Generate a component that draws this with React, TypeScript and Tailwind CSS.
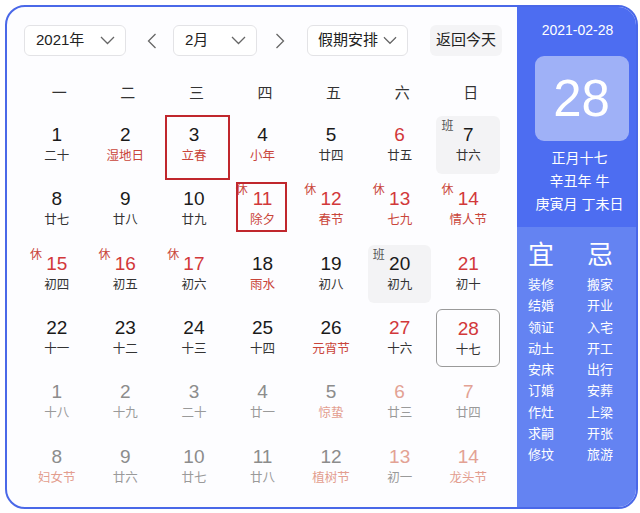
import React from "react";

type Cell = {
  d: number;
  l: string;
  red?: boolean;
  lred?: boolean;
  faded?: boolean;
  tag?: "休" | "班";
  gray?: boolean;
  sel?: boolean;
  box?: "big" | "small";
};

const rows: Cell[][] = [
  [
    { d: 1, l: "二十" },
    { d: 2, l: "湿地日", lred: true },
    { d: 3, l: "立春", lred: true, box: "big" },
    { d: 4, l: "小年", lred: true },
    { d: 5, l: "廿四" },
    { d: 6, l: "廿五", red: true },
    { d: 7, l: "廿六", tag: "班", gray: true },
  ],
  [
    { d: 8, l: "廿七" },
    { d: 9, l: "廿八" },
    { d: 10, l: "廿九" },
    { d: 11, l: "除夕", red: true, lred: true, tag: "休", box: "small" },
    { d: 12, l: "春节", red: true, lred: true, tag: "休" },
    { d: 13, l: "七九", red: true, lred: true, tag: "休" },
    { d: 14, l: "情人节", red: true, lred: true, tag: "休" },
  ],
  [
    { d: 15, l: "初四", red: true, tag: "休" },
    { d: 16, l: "初五", red: true, tag: "休" },
    { d: 17, l: "初六", red: true, tag: "休" },
    { d: 18, l: "雨水", lred: true },
    { d: 19, l: "初八" },
    { d: 20, l: "初九", tag: "班", gray: true },
    { d: 21, l: "初十", red: true },
  ],
  [
    { d: 22, l: "十一" },
    { d: 23, l: "十二" },
    { d: 24, l: "十三" },
    { d: 25, l: "十四" },
    { d: 26, l: "元宵节", lred: true },
    { d: 27, l: "十六", red: true },
    { d: 28, l: "十七", red: true, sel: true },
  ],
  [
    { d: 1, l: "十八", faded: true },
    { d: 2, l: "十九", faded: true },
    { d: 3, l: "二十", faded: true },
    { d: 4, l: "廿一", faded: true },
    { d: 5, l: "惊蛰", faded: true, lred: true },
    { d: 6, l: "廿三", faded: true, red: true },
    { d: 7, l: "廿四", faded: true, red: true },
  ],
  [
    { d: 8, l: "妇女节", faded: true, lred: true },
    { d: 9, l: "廿六", faded: true },
    { d: 10, l: "廿七", faded: true },
    { d: 11, l: "廿八", faded: true },
    { d: 12, l: "植树节", faded: true, lred: true },
    { d: 13, l: "初一", faded: true, red: true },
    { d: 14, l: "龙头节", faded: true, red: true, lred: true },
  ],
];

const yi = ["装修", "结婚", "领证", "动土", "安床", "订婚", "作灶", "求嗣", "修坟"];
const ji = ["搬家", "开业", "入宅", "开工", "出行", "安葬", "上梁", "开张", "旅游"];

function ChevDown({ w = 15 }: { w?: number }) {
  return (
    <svg width={w} height={9} viewBox="0 0 15 9" fill="none">
      <polyline points="1,1 7.5,7.5 14,1" stroke="#666" strokeWidth="1.3" />
    </svg>
  );
}

function ChevSide({ dir }: { dir: "l" | "r" }) {
  return (
    <svg width={10} height={16} viewBox="0 0 10 16" fill="none">
      {dir === "l" ? (
        <polyline points="8.5,1 1.5,8 8.5,15" stroke="#666" strokeWidth="1.3" />
      ) : (
        <polyline points="1.5,1 8.5,8 1.5,15" stroke="#666" strokeWidth="1.3" />
      )}
    </svg>
  );
}

function DayCell({ c }: { c: Cell }) {
  let numColor = "text-[#1a1a1a]";
  let lunColor = "text-[#333]";
  if (c.faded) {
    numColor = c.red ? "text-[#e3a294]" : "text-[#8c8c8c]";
    lunColor = c.lred ? "text-[#e39d8f]" : "text-[#9a9a9a]";
  } else {
    if (c.red) numColor = "text-[#d2383a]";
    if (c.lred) lunColor = "text-[#c9453a]";
  }
  return (
    <div
      className={
        "relative h-[58px] rounded-[6px] flex flex-col items-center pt-[8px] " +
        (c.gray ? "bg-[#f3f3f5] " : "") +
        (c.sel ? "border border-[#9a9a9a] " : "")
      }
    >
      <div className={"text-[19px] leading-[22px] " + numColor}>{c.d}</div>
      <div className={"mt-[2px] text-[12.5px] leading-[16px] " + lunColor}>{c.l}</div>
      {c.tag && (
        <div
          className={
            "absolute left-[5px] top-[3px] text-[12px] leading-[14px] " +
            (c.tag === "休" ? "text-[#c9453a]" : "text-[#555]")
          }
        >
          {c.tag}
        </div>
      )}
      {c.box === "big" && (
        <div className="absolute left-[3px] top-[-1px] w-[65px] h-[65px] border-2 border-[#c0272d]" />
      )}
      {c.box === "small" && (
        <div className="absolute left-[5px] top-[2px] w-[51px] h-[50px] border-2 border-[#c0272d]" />
      )}
    </div>
  );
}

export default function App() {
  return (
    <div
      className="w-[640px] h-[513px] bg-white pt-[5px] pl-[5px]"
      style={{ fontFamily: '"Liberation Sans", "Noto Sans CJK SC", sans-serif' }}
    >
      <div className="w-[633px] h-[504px] rounded-[20px] border-2 border-[#4a68e8] overflow-hidden flex bg-[#fdfdff]">
        {/* Left calendar */}
        <div className="flex-1 pl-[17px] pr-[12px] pt-[18px]">
          {/* toolbar */}
          <div className="flex items-center h-[31px]">
            <div className="w-[102px] h-[31px] rounded-[6px] border border-[#e3e3e6] bg-white flex items-center justify-between pl-[11px] pr-[10px]">
              <span className="text-[15px] text-[#222]">2021年</span>
              <ChevDown />
            </div>
            <div className="ml-[21px] flex items-center">
              <ChevSide dir="l" />
            </div>
            <div className="ml-[16px] w-[84px] h-[31px] rounded-[6px] border border-[#e3e3e6] bg-white flex items-center justify-between pl-[11px] pr-[10px]">
              <span className="text-[15px] text-[#222]">2月</span>
              <ChevDown />
            </div>
            <div className="ml-[18px] flex items-center">
              <ChevSide dir="r" />
            </div>
            <div className="ml-[22px] w-[101px] h-[31px] rounded-[6px] border border-[#e3e3e6] bg-white flex items-center justify-between pl-[10px] pr-[10px]">
              <span className="text-[15px] text-[#222]">假期安排</span>
              <ChevDown w={14} />
            </div>
            <div className="ml-[22px] w-[72px] h-[31px] rounded-[6px] bg-[#f4f4f6] flex items-center justify-center">
              <span className="text-[15px] text-[#222]">返回今天</span>
            </div>
          </div>
          {/* weekdays */}
          <div className="grid grid-cols-7 w-[480px] ml-[1px] mt-[20px] h-[34px] items-center">
            {["一", "二", "三", "四", "五", "六", "日"].map((w) => (
              <div key={w} className="text-center text-[15px] text-[#333]">
                {w}
              </div>
            ))}
          </div>
          {/* days */}
          <div className="grid grid-cols-7 gap-x-[5px] gap-y-[6.33px] w-[475px] ml-[1px] mt-[6px]">
            {rows.flat().map((c, i) => (
              <DayCell key={i} c={c} />
            ))}
          </div>
        </div>
        {/* Right panel */}
        <div className="w-[120px] flex flex-col text-white">
          <div className="bg-[#4d6df1] h-[220px] flex flex-col items-center pt-[14px]">
            <div className="text-[14px] leading-[18px] pl-[2px]">2021-02-28</div>
            <div className="mt-[17px] ml-[10px] w-[94px] h-[85px] rounded-[9px] bg-[#9fb1f7] flex items-center justify-center">
              <span className="text-[51px] leading-none">28</span>
            </div>
            <div className="mt-[6px] ml-[6px] text-[14px] leading-[23px] text-center">
              <div>正月十七</div>
              <div>辛丑年 牛</div>
              <div>庚寅月 丁未日</div>
            </div>
          </div>
          <div className="flex-1 bg-[#6483f2] flex pl-[11px] pt-[12px]">
            <div className="w-[59px] flex flex-col">
              <div className="text-[26px] leading-[32px] pl-[0px]">宜</div>
              <div className="mt-[3px] flex flex-col">
                {yi.map((t) => (
                  <div key={t} className="text-[13px] leading-[21.3px]">
                    {t}
                  </div>
                ))}
              </div>
            </div>
            <div className="flex flex-col">
              <div className="text-[26px] leading-[32px]">忌</div>
              <div className="mt-[3px] flex flex-col">
                {ji.map((t) => (
                  <div key={t} className="text-[13px] leading-[21.3px]">
                    {t}
                  </div>
                ))}
              </div>
            </div>
          </div>
        </div>
      </div>
    </div>
  );
}
